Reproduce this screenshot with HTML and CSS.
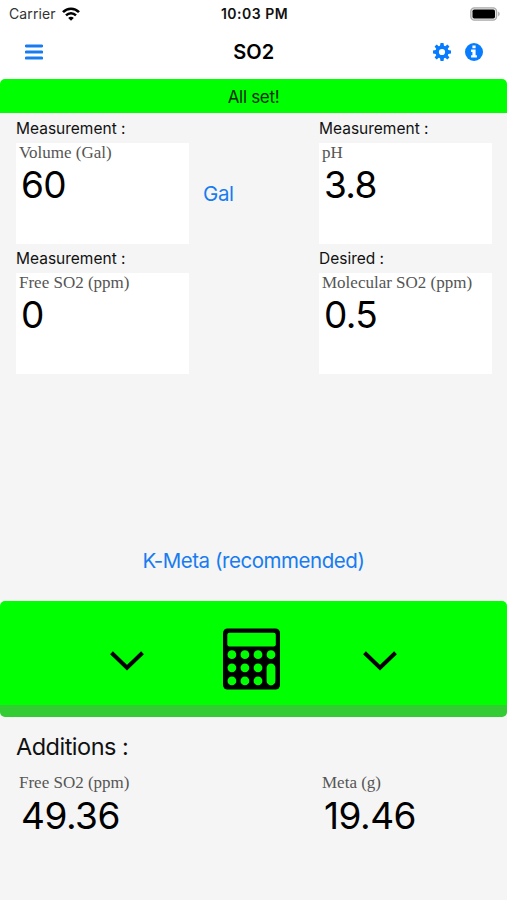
FILE: index.html
```html
<!DOCTYPE html>
<html lang="en">
<head>
<meta charset="utf-8">
<title>SO2</title>
<link rel="stylesheet" href="styles.css">
</head>
<body>
<header class="top">
  <div class="status">
    <div class="carrier"><span class="carrier-name">Carrier</span>
      <svg class="wifi" width="18" height="14" viewBox="0 0 18 14"><path d="M1 5.2C5.4.5 12.600 .5 17 5.200" fill="none" stroke="#000" stroke-width="2.600"/><path d="M4 8.400C6.800 5.500 11.200 5.500 14 8.400" fill="none" stroke="#000" stroke-width="2.400"/><path d="M9 13.800 6.200 10.900C7.700 9.400 10.300 9.400 11.800 10.900Z"/></svg>
    </div>
    <time class="clock">10:03 PM</time>
    <svg class="battery" width="31" height="14" viewBox="0 0 31 14"><rect x=".8" y=".8" width="25.800" height="12.400" rx="3.600" fill="#e8e8e8" stroke="#aaa" stroke-width="1.300"/><rect x="2.500" y="2.500" width="22.500" height="9" rx="1.800"/><path d="M28.200 4.600c2 1 2 3.800 0 4.800z" fill="#aaa"/></svg>
  </div>
  <nav class="nav">
    <svg class="menu" width="18" height="16" viewBox="0 0 18 16"><path d="M1.300 1.900H16.700M1.300 8H16.700M1.300 14.100H16.700" stroke="#187cf0" stroke-width="3" stroke-linecap="round"/></svg>
    <h1 class="title">SO2</h1>
    <div class="actions">
      <svg width="18" height="18" viewBox="-9 -9 18 18" fill="#087cff"><path fill-rule="evenodd" d="M-1.500-9H1.500L2-6.300 3.200-5.800 5.400-7.400 7.400-5.400 5.800-3.200 6.300-2 9-1.500V1.500L6.300 2 5.800 3.200 7.400 5.400 5.400 7.400 3.200 5.800 2 6.300 1.500 9H-1.500L-2 6.300-3.200 5.800-5.400 7.400-7.400 5.400-5.800 3.200-6.300 2-9 1.500V-1.500L-6.300-2-5.800-3.200-7.400-5.400-5.400-7.400-3.200-5.800-2-6.300ZM0-3.100A3.100 3.100 0 1 0 0 3.100 3.100 3.100 0 1 0 0-3.100Z"/></svg>
      <svg width="18" height="18" viewBox="0 0 18 18"><circle cx="9" cy="9" r="9" fill="#087cff"/><path d="M7.400 2.500h3.200v2.700H7.400zM6.100 6.600h4.500v5.600h1.300v2.300H6.100v-2.300h1.300V8.900H6.100z" fill="#fff"/></svg>
    </div>
  </nav>
</header>
<main>
  <div class="banner"><span>All set!</span></div>
  <section class="fields">
    <div class="field"><div class="label">Measurement :</div><div class="box"><div class="name volume">Volume (Gal)</div><div class="value">60</div></div></div>
    <div class="unit">Gal</div>
    <div class="field"><div class="label">Measurement :</div><div class="box"><div class="name">pH</div><div class="value">3.8</div></div></div>
    <div class="field"><div class="label">Measurement :</div><div class="box"><div class="name">Free SO2 (ppm)</div><div class="value">0</div></div></div>
    <div></div>
    <div class="field"><div class="label">Desired :</div><div class="box"><div class="name">Molecular SO2 (ppm)</div><div class="value">0.5</div></div></div>
  </section>
  <div class="source"><span>K-Meta (recommended)</span></div>
  <div class="calculate">
    <svg class="chevron" width="34" height="20" viewBox="0 0 34 20"><path d="M1.500 1.700 17 16.700 32.500 1.700" fill="none" stroke="#000" stroke-width="4"/></svg>
    <svg class="calculator" width="57" height="62" viewBox="0 0 57 62"><rect y=".5" width="57" height="61" rx="4.500"/><g fill="#0f0"><rect x="4.300" y="4.800" width="48.500" height="13.700" rx="2"/><circle cx="8.900" cy="26.700" r="4.400"/><circle cx="21.900" cy="26.700" r="4.400"/><circle cx="35" cy="26.700" r="4.400"/><circle cx="48" cy="26.700" r="4.400"/><circle cx="8.900" cy="39.800" r="4.400"/><circle cx="21.900" cy="39.800" r="4.400"/><circle cx="35" cy="39.800" r="4.400"/><circle cx="8.900" cy="52.900" r="4.400"/><circle cx="21.900" cy="52.900" r="4.400"/><circle cx="35" cy="52.900" r="4.400"/><rect x="43.600" y="35.400" width="8.800" height="22" rx="4.400"/></g></svg>
    <svg class="chevron" width="34" height="20" viewBox="0 0 34 20"><path d="M1.500 1.700 17 16.700 32.500 1.700" fill="none" stroke="#000" stroke-width="4"/></svg>
  </div>
  <section class="results">
    <h2 class="heading">Additions :</h2>
    <div class="result-row">
      <div class="result"><div class="name">Free SO2 (ppm)</div><div class="value">49.36</div></div>
      <div class="result"><div class="name">Meta (g)</div><div class="value">19.46</div></div>
    </div>
  </section>
</main>
</body>
</html>
```
FILE: styles.css
```css
* { box-sizing: border-box; }
body {
  margin: 0;
  width: 507px;
  height: 900px;
  overflow: hidden;
  background: #f5f5f5;
  color: #111;
  font-family: Inter, "Liberation Sans", sans-serif;
}
svg { display: block; flex: none; }
.top { height: 79px; background: #fff; }
.status {
  display: grid;
  grid-template-columns: 1fr auto 1fr;
  align-items: center;
  height: 27px;
  padding: 0 6px 0 9px;
}
.carrier { display: flex; align-items: center; gap: 6px; }
.carrier-name { font-size: 14px; line-height: 27px; color: #333; letter-spacing: .1px; }
.clock { margin-right: 1px; font-size: 14px; line-height: 27px; font-weight: 600; color: #111; letter-spacing: .5px; }
.battery { justify-self: end; }
.nav {
  display: grid;
  grid-template-columns: 1fr auto 1fr;
  align-items: center;
  height: 50px;
  padding: 0 24.5px 0 25px;
}
.title { margin: 0; font-size: 20px; line-height: 50px; font-weight: 600; color: #000; }
.actions { display: flex; justify-content: flex-end; gap: 13.5px; }
.banner {
  height: 34px;
  line-height: 36px;
  border-radius: 5px 5px 0 0;
  background: #0f0;
  text-align: center;
  font-size: 17px;
  letter-spacing: -.3px;
  color: #052b05;
}
main { background: linear-gradient(#fff 6px, #f5f5f5 6px); }
.fields {
  display: grid;
  grid-template-columns: 173px 130px 173px;
  grid-template-rows: 130px 131px;
  padding-left: 16px;
}
.label { height: 30px; line-height: 31px; font-size: 15.500px; white-space: nowrap; }
.box { height: 101px; padding-left: 3px; background: #fff; }
.name {
  height: 20px;
  line-height: 20px;
  font-family: "Liberation Serif", serif;
  font-size: 17px;
  color: #555;
  white-space: nowrap;
}
.value {
  padding-left: 2px;
  font-size: 37px;
  line-height: 44px;
  letter-spacing: -.7px;
  color: #000;
  white-space: nowrap;
}
.unit { padding: 66px 0 0 14px; font-size: 20.500px; line-height: 30px; letter-spacing: -.4px; color: #187cf0; }
.source {
  height: 227px;
  padding-top: 172px;
  text-align: center;
  font-size: 20.500px;
  line-height: 30px;
  letter-spacing: -.45px;
  color: #187cf0;
}
.calculate {
  display: grid;
  grid-template-columns: 254px 0 252px;
  align-items: center;
  justify-items: center;
  height: 115.5px;
  border-bottom: 12px solid #3c3;
  border-radius: 5px;
  background: #0f0;
}
.calculator { margin: 12px 5px 0 0; }
.chevron { margin-top: 16px; }
.results { padding: 15.5px 0 0 16px; }
.heading { margin: 0; font-size: 23.500px; line-height: 30px; font-weight: 400; letter-spacing: -.5px; }
.result-row { display: grid; grid-template-columns: 303px 173px; padding-top: 11px; }
.results .value { line-height: 46px; letter-spacing: -.5px; }
.result { padding-left: 3px; }
```
